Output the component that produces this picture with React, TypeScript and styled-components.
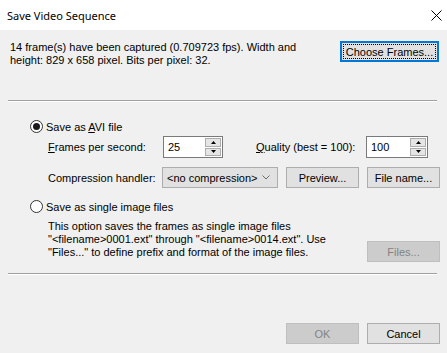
import React from 'react'
import styled, { createGlobalStyle, css } from 'styled-components'

const GlobalStyle = createGlobalStyle`
  html, body {
    margin: 0;
    padding: 0;
    background: #f0f0f0;
  }
  * {
    box-sizing: border-box;
  }
`

const Dialog = styled.div`
  display: flex;
  flex-direction: column;
  width: 447px;
  height: 353px;
  overflow: hidden;
  background: #f0f0f0;
  color: #000;
  font-family: 'Liberation Sans', Arial, sans-serif;
  font-size: 11px;
`

const TitleBar = styled.div`
  display: flex;
  align-items: center;
  justify-content: space-between;
  height: 30px;
  padding: 0 5px 0 7px;
  background: #fff;
  font-family: 'Noto Sans', 'Liberation Sans', sans-serif;
  font-size: 11px;
`

const InfoRow = styled.div`
  display: flex;
  align-items: flex-start;
  margin-top: 11px;
  padding: 0 8px 0 10px;
`

const InfoText = styled.div`
  flex: 1;
  line-height: 13px;
`

const Separator = styled.div`
  margin: ${(p: { $top: number }) => p.$top}px 10px 0 8px;
  border-top: 1px solid #a0a0a0;
  border-bottom: 1px solid #fff;
`

const RadioRow = styled.label<{ $top: number }>`
  display: flex;
  align-items: center;
  gap: 3px;
  height: 13px;
  margin-top: ${(p) => p.$top}px;
  padding-left: 30px;
`

const RadioCircle = styled.span<{ $checked?: boolean }>`
  display: flex;
  align-items: center;
  justify-content: center;
  width: 13px;
  height: 13px;
  border: 1px solid #333;
  border-radius: 50%;
  background: #fff;

  &::after {
    content: '';
    display: ${(p) => (p.$checked ? 'block' : 'none')};
    width: 7px;
    height: 7px;
    border-radius: 50%;
    background: #1a1a1a;
  }
`

const FieldRow = styled.div<{ $top: number }>`
  display: flex;
  align-items: center;
  margin-top: ${(p) => p.$top}px;
  padding-left: 48px;
`

const FieldLabel = styled.span<{ $width: number; $gap?: number }>`
  width: ${(p) => p.$width}px;
  margin-left: ${(p) => p.$gap ?? 0}px;
  flex-shrink: 0;
`

const SpinBox = styled.div<{ $width: number }>`
  display: flex;
  width: ${(p) => p.$width}px;
  height: 22px;
  border: 1px solid #7a7a7a;
  background: #fff;
`

const SpinValue = styled.div`
  flex: 1;
  display: flex;
  align-items: center;
  padding-left: 4px;
`

const SpinButtons = styled.div`
  display: flex;
  flex-direction: column;
  gap: 1px;
  padding: 1px;
`

const SpinButton = styled.div`
  display: flex;
  align-items: center;
  justify-content: center;
  width: 16px;
  flex: 1;
  border: 1px solid #adadad;
  background: #e5e5e5;
`

const Combo = styled.div`
  display: flex;
  align-items: center;
  justify-content: space-between;
  width: 116px;
  height: 21px;
  padding: 0 7px 0 4px;
  border: 1px solid #adadad;
  background: #e1e1e1;
`

const Button = styled.div<{ $width?: number; $gap?: number; $disabled?: boolean; $default?: boolean }>`
  display: flex;
  align-items: center;
  justify-content: center;
  width: ${(p) => p.$width ?? 73}px;
  height: 21px;
  margin-left: ${(p) => p.$gap ?? 0}px;
  flex-shrink: 0;
  border: 1px solid #adadad;
  background: #e1e1e1;
  color: #000;

  ${(p) =>
    p.$disabled &&
    css`
      border-color: #bfbfbf;
      background: #cccccc;
      color: #838383;
    `}

  ${(p) =>
    p.$default &&
    css`
      border: 2px solid #0078d7;
      padding: 1px;
    `}
`

const FocusRing = styled.span`
  display: flex;
  align-items: center;
  justify-content: center;
  width: 100%;
  height: 100%;
  border: 1px dotted #000;
`

const DescRow = styled.div`
  display: flex;
  align-items: flex-start;
  margin-top: 7px;
  padding: 0 7px 0 48px;
`

const DescText = styled.div`
  flex: 1;
  line-height: 13px;
`

const FilesButton = styled(Button)`
  margin-top: 21px;
`

const Footer = styled.div`
  display: flex;
  justify-content: flex-end;
  gap: 8px;
  margin-top: 48px;
  padding-right: 7px;
`

const CloseIcon = () => (
  <svg width="11" height="11" viewBox="0 0 11 11">
    <path d="M0.5 0.5 L10.5 10.5 M10.5 0.5 L0.5 10.5" stroke="#000" strokeWidth="1" fill="none" />
  </svg>
)

const Arrow = ({ up }: { up?: boolean }) => (
  <svg width="5" height="3" viewBox="0 0 5 3">
    <path d={up ? 'M0 3 L2.5 0 L5 3 Z' : 'M0 0 L2.5 3 L5 0 Z'} fill="#000" />
  </svg>
)

const Chevron = () => (
  <svg width="8" height="5" viewBox="0 0 8 5">
    <path d="M0.5 0.5 L4 4 L7.5 0.5" stroke="#6d6d6d" strokeWidth="1" fill="none" />
  </svg>
)

const Spin = ({ value, width }: { value: string; width: number }) => (
  <SpinBox $width={width}>
    <SpinValue>{value}</SpinValue>
    <SpinButtons>
      <SpinButton>
        <Arrow up />
      </SpinButton>
      <SpinButton>
        <Arrow />
      </SpinButton>
    </SpinButtons>
  </SpinBox>
)

export default function App() {
  return (
    <>
      <GlobalStyle />
      <Dialog>
        <TitleBar>
          <span>Save Video Sequence</span>
          <CloseIcon />
        </TitleBar>

        <InfoRow>
          <InfoText>
            14 frame(s) have been captured (0.709723 fps). Width and
            <br />
            height: 829 x 658 pixel. Bits per pixel: 32.
          </InfoText>
          <Button $width={99} $default>
            <FocusRing>Choose Frames...</FocusRing>
          </Button>
        </InfoRow>

        <Separator $top={33} />

        <RadioRow $top={18}>
          <RadioCircle $checked />
          <span>
            Save as <u>A</u>VI file
          </span>
        </RadioRow>

        <FieldRow $top={3}>
          <FieldLabel $width={115}>
            <u>F</u>rames per second:
          </FieldLabel>
          <Spin value="25" width={60} />
          <FieldLabel $width={110} $gap={33}>
            <u>Q</u>uality (best = 100):
          </FieldLabel>
          <Spin value="100" width={62} />
        </FieldRow>

        <FieldRow $top={9}>
          <FieldLabel $width={114}>Compression handler:</FieldLabel>
          <Combo>
            <span>&lt;no compression&gt;</span>
            <Chevron />
          </Combo>
          <Button $gap={8}>Preview...</Button>
          <Button $gap={8}>File name...</Button>
        </FieldRow>

        <RadioRow $top={12}>
          <RadioCircle />
          <span>Save as single image files</span>
        </RadioRow>

        <DescRow>
          <DescText>
            This option saves the frames as single image files
            <br />
            "&lt;filename&gt;0001.ext" through "&lt;filename&gt;0014.ext". Use
            <br />
            "Files..." to define prefix and format of the image files.
          </DescText>
          <FilesButton $disabled>Files...</FilesButton>
        </DescRow>

        <Separator $top={11} />

        <Footer>
          <Button $disabled>OK</Button>
          <Button>Cancel</Button>
        </Footer>
      </Dialog>
    </>
  )
}
